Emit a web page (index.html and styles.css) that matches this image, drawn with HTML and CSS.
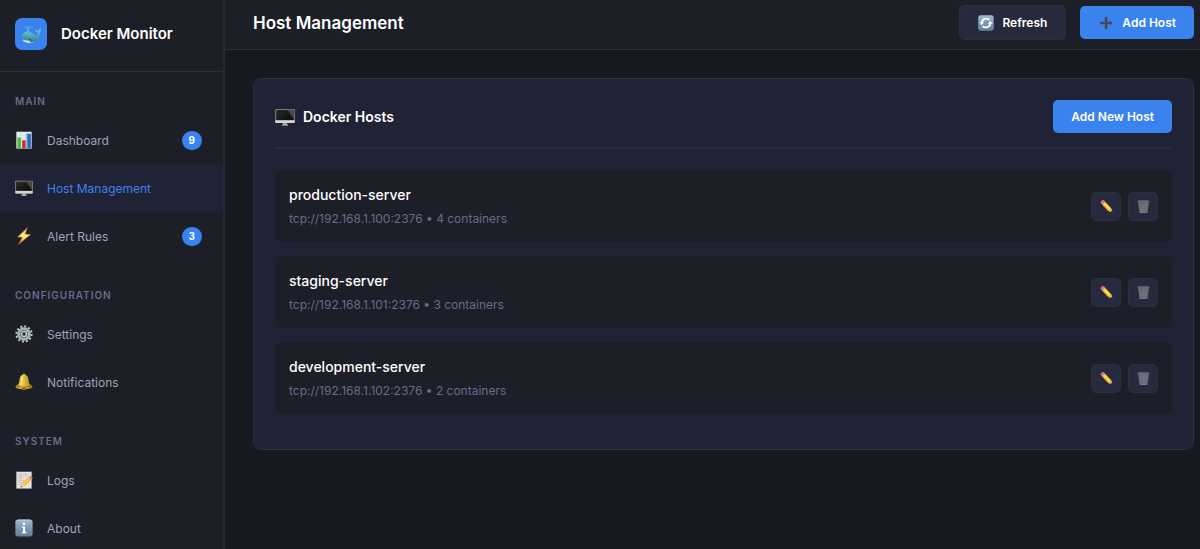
FILE: index.html
```html
<!DOCTYPE html>
<html lang="en">
<head>
<meta charset="utf-8">
<meta name="viewport" content="width=device-width, initial-scale=1">
<title>Docker Monitor</title>
<link rel="stylesheet" href="styles.css">
</head>
<body>
<svg class="sprite" aria-hidden="true">
  <defs>
    <linearGradient id="g-whale" x1="0" y1="0" x2="0" y2="1"><stop offset="0" stop-color="#7cc9d8"/><stop offset=".55" stop-color="#4aa3bd"/><stop offset="1" stop-color="#2f7796"/></linearGradient>
    <linearGradient id="g-screen" x1="0" y1="0" x2="1" y2="1"><stop offset="0" stop-color="#2b2b2b"/><stop offset="1" stop-color="#0c0c0c"/></linearGradient>
    <linearGradient id="g-bell" x1="0" y1="0" x2="1" y2="0"><stop offset="0" stop-color="#b8860f"/><stop offset=".4" stop-color="#f0cf52"/><stop offset="1" stop-color="#a3720b"/></linearGradient>
    <linearGradient id="g-tile" x1="0" y1="0" x2="0" y2="1"><stop offset="0" stop-color="#a5bbd2"/><stop offset=".5" stop-color="#7d98b4"/><stop offset="1" stop-color="#647f9b"/></linearGradient>
    <linearGradient id="g-bolt" x1="0" y1="0" x2="0" y2="1"><stop offset="0" stop-color="#e8a02c"/><stop offset=".5" stop-color="#ffe36b"/><stop offset="1" stop-color="#d98a1c"/></linearGradient>
    <symbol id="whale" viewBox="0 0 20 20">
      <path d="M7.200 7.500C7.300 5 6 3.200 4 3.200M7.200 7.500C7.300 4.500 8.500 2.700 11 3.200M7.200 4.500V2" fill="none" stroke="#62bfdc" stroke-width="1" stroke-linecap="round"/>
      <path d="M.8 13C.9 9.200 3.900 7.300 7.400 7.500c4.200.3 5.200 4 8.200 3.800 1.300-.2 1.500-1.500 1-2.900-1-.1-2-.7-2.300-2 1.400-.2 2.500.1 3.200.9.200-1.300.9-2.200 2.100-2.700.6 1.700.2 3.100-1.100 4.100C19.300 13.200 15.700 18 9.800 18.700 4.200 19.300.8 16.900.8 13z" fill="url(#g-whale)"/>
      <path d="M1.200 15.200c2.100 1.300 5.400.8 7.800 1.900 1.200.6 2.700.7 4.300.3-1.900 1.400-5 1.900-7.700 1.300-2.300-.5-3.800-1.600-4.400-3.500z" fill="#c9d6d9"/>
      <circle cx="9" cy="15.500" r=".8" fill="#153849"/>
      <path d="M9 17.300l3-.6-1.500 1.800z" fill="#24566c"/>
    </symbol>
    <symbol id="chart" viewBox="0 0 20 20">
      <path d="M1.500.8h17v18.700h-17z" fill="#e6edf4"/>
      <path d="M1.500 4.500h17M1.500 8h17M1.500 11.500h17M1.500 15h17M6.500.8v18M12 .8v18" stroke="#bccbd8" stroke-width=".5"/>
      <path d="M2.300 7.300h4.300v11.700H2.300z" fill="#4fb83d"/><path d="M7.900 10.400h3.900V19H7.900z" fill="#c7312c"/><path d="M13.100 3h4.500v16h-4.500z" fill="#2f66c4"/>
      <path d="M2.300 7.300h1.100V19H2.300z" fill="#86d76f"/><path d="M13.100 3h1.100v16h-1.100z" fill="#5c8fdc"/>
    </symbol>
    <symbol id="monitor" viewBox="0 0 20 20">
      <path d="M8 15h4v3H8z" fill="#989898"/><path d="M7 17.500h6v1H7z" fill="#d2d2d2"/>
      <rect x=".3" y="2" width="19.400" height="14" rx=".7" fill="#8f9192"/>
      <path d="M.3 13.200h19.400v2.100q0 .7-.7.7H1q-.7 0-.7-.7z" fill="#d4d5d5"/>
      <path d="M1.200 2.800h17.600v10.300H1.200z" fill="url(#g-screen)"/>
      <path d="M12.300 2.800h6.500v9.200z" fill="#4a4a4a"/>
    </symbol>
    <symbol id="bolt" viewBox="0 0 20 20">
      <path d="M13.700.6 2.800 11.200l5.300.2L3.800 19.400 17.400 8.400l-6-.5z" fill="url(#g-bolt)" stroke="#b36f18" stroke-width=".6" stroke-linejoin="round"/>
      <path d="M11.800 4 6 10.100l4.800.2-2.600 4.200 5.700-5-4.400-.5z" fill="#fff09a"/>
    </symbol>
    <symbol id="gear" viewBox="0 0 20 20">
      <circle cx="10" cy="10" r="8.400" fill="none" stroke="#b5bec4" stroke-width="2.400" stroke-dasharray="2.300 2.098"/>
      <circle cx="10" cy="10" r="5.900" fill="none" stroke="#a1adb4" stroke-width="3.400"/>
      <circle cx="10" cy="10" r="4.300" fill="#657279"/>
      <circle cx="10" cy="10" r="2.700" fill="#343a43" stroke="#dce2e5" stroke-width="1.200"/>
      <path d="M10 4v2M10 14v2M4 10h2M14 10h2M5.700 5.700l1.500 1.500M12.800 12.800l1.500 1.500M14.300 5.700l-1.500 1.500M7.200 12.800l-1.500 1.500" stroke="#d2d8dc" stroke-width=".8"/>
    </symbol>
    <symbol id="bell" viewBox="0 0 20 20">
      <circle cx="10" cy="2" r="1.500" fill="#c69524"/>
      <path d="M10 2c3.300 0 4.800 2.200 5.100 5.500.3 3.600.8 5.300 3.300 6.500 1.500.9 1.300 2.500-.2 3-5 1.500-11.400 1.500-16.400 0-1.500-.5-1.700-2.100-.2-3 2.500-1.200 3-2.900 3.300-6.500C5.200 4.200 6.700 2 10 2z" fill="url(#g-bell)"/>
      <path d="M2.500 14.700c4.300 1.400 10.700 1.400 15 0" fill="none" stroke="#8b610b" stroke-width=".9"/>
      <ellipse cx="10" cy="17.700" rx="2.700" ry="1.300" fill="#8e6513"/>
      <path d="M8 4.600c-.9 1.700-.7 5.200-1.500 8" fill="none" stroke="#ffed91" stroke-width="1.300" stroke-linecap="round"/>
    </symbol>
    <symbol id="memo" viewBox="0 0 20 20">
      <path d="M1.500.8h17v18.700h-17z" fill="#e4e3dc"/>
      <path d="M3.500 3.500h4M9 3.500h6M3.500 5.800h6M11 5.800h3M3.500 8.100h5M3.500 10.400h7M3.500 12.700h4M3.500 15h3" stroke="#a5a6a4" stroke-width=".8" stroke-dasharray="1.800 .5"/>
      <path d="m6.300 18.200 1.300-4.900 3.200 3.200z" fill="#e5c795"/><path d="m6.300 18.200.5-1.700 1.200 1.200z" fill="#333"/>
      <path d="m7.600 13.300 6.900-5.900 2.900 3.200-6.600 5.900z" fill="#eeb52b"/><path d="m8.600 14.300 6.900-5.900 1 1.100-6.900 5.900z" fill="#ffda61"/>
      <path d="m14.500 7.400 1.100-1 2.900 3.200-1.100 1z" fill="#aeb9bc"/><path d="m15.600 6.400.9-.7c1.500-.8 3.600 1.300 2.900 3l-.9.9z" fill="#df777a"/>
    </symbol>
    <symbol id="info" viewBox="0 0 20 20">
      <rect x=".4" y=".6" width="19.200" height="18.800" rx="3" fill="url(#g-tile)"/>
      <path d="M3 1.200h14" stroke="#c5d4e3" stroke-width=".8"/>
      <circle cx="10" cy="5.400" r="1.500" fill="#fff"/><path d="M7.700 8.200h3.500v6.200h1.400v1.500H7.500v-1.500H9V9.600H7.700z" fill="#fff"/>
    </symbol>
    <symbol id="sync" viewBox="0 0 20 20">
      <rect x=".3" y=".3" width="19.400" height="19.400" rx="3" fill="url(#g-tile)"/>
      <path d="M4.600 9.500A5.600 5.600 0 0 1 14.200 6.200M15.400 10.500A5.600 5.600 0 0 1 5.800 13.800" fill="none" stroke="#fff" stroke-width="2.200"/>
      <path d="m1.700 9 2.900 3.700L7.500 9zM18.300 11l-2.900-3.700-2.900 3.700z" fill="#fff"/>
    </symbol>
    <symbol id="plus" viewBox="0 0 20 20"><path d="M8.500 2.500h3.300v5.900h5.900v3.300h-5.900v5.900H8.500v-5.900H2.600V8.400h5.900z" fill="#454b59"/></symbol>
    <symbol id="pencil" viewBox="0 0 20 20">
      <path d="m19 19-1.300-6-4.900 4.300z" fill="#e7c58b"/><path d="m19 19-.7-2.600-2 1.800z" fill="#34302b"/>
      <path d="m3.800 7.500 4.700-4.300 9.200 9.800-4.900 4.300z" fill="#eeb22b"/><path d="m5.400 6 2-1.800 9.200 9.800-2.100 1.800z" fill="#ffdc61"/>
      <path d="M2.300 5.900 7 1.600l1.500 1.600-4.700 4.300z" fill="#b9c2c5"/><path d="M2.300 5.900 1.100 4.600C-.4 2.700 3.900-1.200 5.700.3L7 1.600z" fill="#e86f73"/>
    </symbol>
    <symbol id="trash" viewBox="0 0 20 20">
      <path d="M1.200 1.800h17.600l-2.500 17.200q-6.300 1.100-12.600 0z" fill="#60646d"/>
      <path d="m4 4 2 14M7 4l1.500 14M10 4v14.500M13 4l-1.500 14M16 4l-2 14M3 7.500h14M3.500 11h13M4 14.500h12" fill="none" stroke="#7d8189" stroke-width=".7"/>
      <ellipse cx="10" cy="1.900" rx="9" ry="1.200" fill="#555962" stroke="#858991" stroke-width=".8"/>
      <path d="M3.700 18.800q6.300 1.100 12.600 0" fill="none" stroke="#9ea1a8"/>
    </symbol>
  </defs>
</svg>

<div class="app">
  <aside class="sidebar">
    <div class="brand">
      <span class="brand-logo"><svg class="icon"><use href="#whale"/></svg></span>
      <span class="brand-name">Docker Monitor</span>
    </div>
    <nav class="nav" aria-label="Main navigation">
      <section class="nav-section">
        <h2 class="nav-title">MAIN</h2>
        <a class="nav-item" href="#dashboard"><svg class="icon"><use href="#chart"/></svg><span class="nav-label">Dashboard</span><span class="badge">9</span></a>
        <a class="nav-item active" href="#hosts" aria-current="page"><svg class="icon"><use href="#monitor"/></svg><span class="nav-label">Host Management</span></a>
        <a class="nav-item" href="#alerts"><svg class="icon"><use href="#bolt"/></svg><span class="nav-label">Alert Rules</span><span class="badge">3</span></a>
      </section>
      <section class="nav-section">
        <h2 class="nav-title">CONFIGURATION</h2>
        <a class="nav-item" href="#settings"><svg class="icon"><use href="#gear"/></svg><span class="nav-label">Settings</span></a>
        <a class="nav-item" href="#notifications"><svg class="icon"><use href="#bell"/></svg><span class="nav-label">Notifications</span></a>
      </section>
      <section class="nav-section">
        <h2 class="nav-title">SYSTEM</h2>
        <a class="nav-item" href="#logs"><svg class="icon"><use href="#memo"/></svg><span class="nav-label">Logs</span></a>
        <a class="nav-item" href="#about"><svg class="icon"><use href="#info"/></svg><span class="nav-label">About</span></a>
      </section>
    </nav>
  </aside>

  <div class="page">
    <header class="topbar">
      <h1 class="page-title">Host Management</h1>
      <div class="topbar-actions">
        <button class="btn btn-secondary" type="button"><svg class="icon"><use href="#sync"/></svg>Refresh</button>
        <button class="btn btn-primary" type="button"><svg class="icon"><use href="#plus"/></svg>Add Host</button>
      </div>
    </header>
    <main class="content">
      <section class="card">
        <div class="card-header">
          <h2 class="card-title"><svg class="icon"><use href="#monitor"/></svg>Docker Hosts</h2>
          <button class="btn btn-primary" type="button">Add New Host</button>
        </div>
        <ul class="hosts">
          <li class="host">
            <div><h3 class="host-name">production-server</h3><p class="host-meta">tcp://192.168.1.100:2376 • 4 containers</p></div>
            <div class="host-actions"><button class="icon-btn" type="button" aria-label="Edit production-server"><svg class="icon"><use href="#pencil"/></svg></button><button class="icon-btn" type="button" aria-label="Delete production-server"><svg class="icon"><use href="#trash"/></svg></button></div>
          </li>
          <li class="host">
            <div><h3 class="host-name">staging-server</h3><p class="host-meta">tcp://192.168.1.101:2376 • 3 containers</p></div>
            <div class="host-actions"><button class="icon-btn" type="button" aria-label="Edit staging-server"><svg class="icon"><use href="#pencil"/></svg></button><button class="icon-btn" type="button" aria-label="Delete staging-server"><svg class="icon"><use href="#trash"/></svg></button></div>
          </li>
          <li class="host">
            <div><h3 class="host-name">development-server</h3><p class="host-meta">tcp://192.168.1.102:2376 • 2 containers</p></div>
            <div class="host-actions"><button class="icon-btn" type="button" aria-label="Edit development-server"><svg class="icon"><use href="#pencil"/></svg></button><button class="icon-btn" type="button" aria-label="Delete development-server"><svg class="icon"><use href="#trash"/></svg></button></div>
          </li>
        </ul>
      </section>
    </main>
  </div>
</div>
</body>
</html>
```

FILE: styles.css
```css
:root {
  --bg: #16191f;
  --surface: #1c1e28;
  --card: #202235;
  --raised: #27293d;
  --border: #2d2f3f;
  --blue: #3a82ee;
  --text: #ffffff;
  --text-soft: #a1a1b8;
  --text-muted: #6b6b88;
}

* { box-sizing: border-box; }

body {
  margin: 0;
  background: var(--bg);
  color: var(--text);
  font-family: Inter, "Liberation Sans", sans-serif;
  font-size: 12px;
}

h1, h2, h3, p, ul { margin: 0; padding: 0; }

.sprite { position: absolute; width: 0; height: 0; }

.icon { flex: none; width: 18px; height: 18px; display: block; }

.app { display: flex; height: 100vh; }

.sidebar {
  flex: none;
  width: 225px;
  overflow: hidden;
  background: var(--surface);
  border-right: 2px solid #272935;
}

.brand {
  display: flex;
  align-items: center;
  gap: 14px;
  height: 72px;
  padding: 0 15px 4px;
  border-bottom: 1px solid var(--border);
}

.brand-logo {
  display: grid;
  place-items: center;
  width: 32px;
  height: 32px;
  border-radius: 7px;
  background: var(--blue);
}

.brand-logo .icon { width: 20px; height: 20px; }

.brand-name { font-size: 15px; font-weight: 600; }

.nav {
  display: flex;
  flex-direction: column;
  gap: 28px;
  padding-top: 22px;
}

.nav-title {
  padding: 0 15px 7px;
  color: var(--text-muted);
  font-size: 10px;
  font-weight: 600;
  line-height: 15px;
  letter-spacing: 1px;
}

.nav-item {
  display: flex;
  align-items: center;
  gap: 14px;
  height: 48px;
  padding: 0 21px 0 15px;
  color: var(--text-soft);
  text-decoration: none;
}

.nav-item.active { background: var(--card); color: var(--blue); }

.nav-label { flex: 1; }

.badge {
  padding: 0 7px;
  border-radius: 10px;
  background: var(--blue);
  color: var(--text);
  font-size: 10px;
  font-weight: 700;
  line-height: 19px;
}

.page { flex: 1; min-width: 0; overflow: auto; }

.topbar {
  display: flex;
  align-items: center;
  justify-content: space-between;
  padding: 5px 6px 9px 28px;
  background: var(--surface);
  border-bottom: 1px solid var(--border);
}

.page-title { font-size: 17px; font-weight: 600; }

.topbar-actions { display: flex; align-items: center; gap: 14px; }

.btn {
  display: flex;
  align-items: center;
  gap: 8px;
  padding: 0 18px;
  border: 0;
  border-radius: 5px;
  color: var(--text);
  font: 600 12px/33px Inter, "Liberation Sans", sans-serif;
}

.btn .icon { width: 16px; height: 16px; }

.btn-primary { background: var(--blue); }

.btn-secondary { background: var(--raised); border: 1px solid var(--border); }

.content { padding: 28px 6px 28px 28px; }

.card {
  padding: 21px 21px 35px;
  background: var(--card);
  border: 1px solid var(--border);
  border-radius: 8px;
}

.card-header {
  display: flex;
  align-items: center;
  justify-content: space-between;
  padding-bottom: 14px;
  margin-bottom: 21px;
  border-bottom: 2px solid #292b3c;
}

.card-title {
  display: flex;
  align-items: center;
  gap: 8px;
  font-size: 14px;
  font-weight: 600;
}

.card-title .icon { width: 20px; height: 20px; }

.hosts { display: grid; gap: 14px; list-style: none; }

.host {
  display: flex;
  align-items: center;
  justify-content: space-between;
  padding: 14px;
  background: var(--surface);
  border-radius: 6px;
}

.host-name { font-size: 14px; font-weight: 500; line-height: 22px; margin-bottom: 3px; }

.host-meta { color: var(--text-muted); font-size: 12px; line-height: 19px; }

.host-actions { display: flex; gap: 7px; }

.icon-btn {
  display: grid;
  place-items: center;
  width: 30px;
  height: 29px;
  padding: 0;
  background: var(--raised);
  border: 1px solid var(--border);
  border-radius: 5px;
}

.icon-btn .icon { width: 13px; height: 13px; }
```
